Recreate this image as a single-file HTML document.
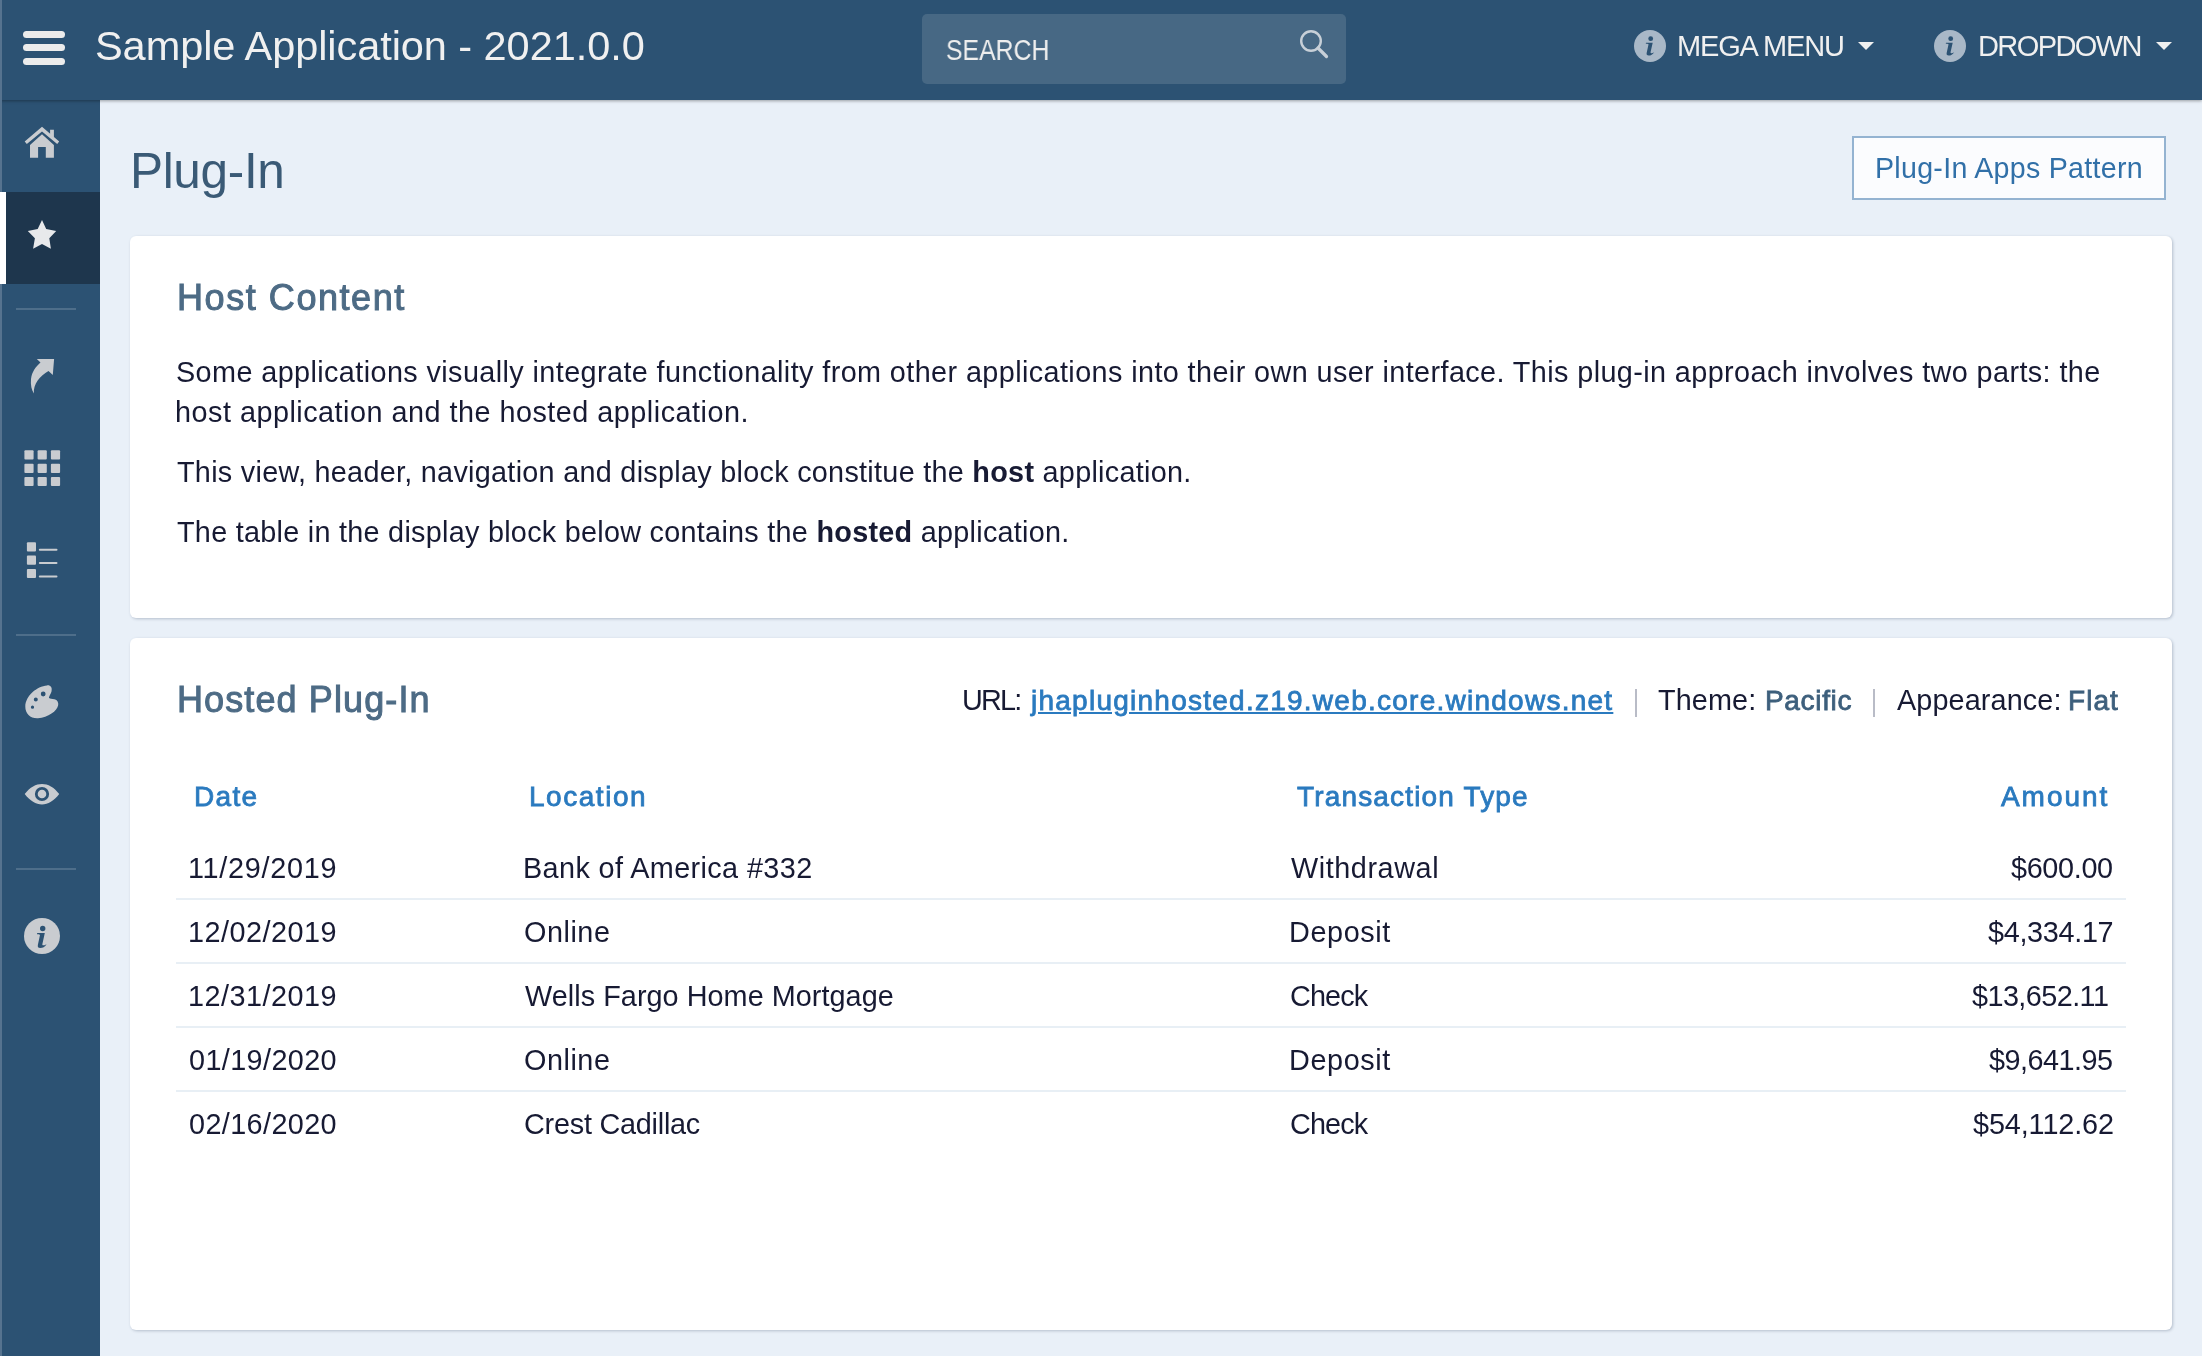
<!DOCTYPE html>
<html>
<head>
<meta charset="utf-8">
<title>Plug-In</title>
<style>
html,body{margin:0;padding:0;}
body{width:2202px;height:1356px;overflow:hidden;position:relative;background:#e9f0f8;font-family:"Liberation Sans",sans-serif;}
.a{position:absolute;}
.t{position:absolute;white-space:nowrap;line-height:1;z-index:8;will-change:transform;}
#hdr{left:0;top:0;width:2202px;height:100px;background:#2c5273;box-shadow:0 1px 3px rgba(0,0,0,.35);z-index:5;}
#side{left:0;top:100px;width:100px;height:1256px;background:#2c5273;z-index:4;}
#edge{left:0;top:0;width:2px;height:1356px;background:#56738f;z-index:6;}
.sep{position:absolute;left:16px;width:60px;height:2px;background:#4e6e8a;z-index:4;}
.card{position:absolute;left:130px;width:2042px;background:#fff;border-radius:6px;box-shadow:1px 1px 3px rgba(30,50,80,.26);}
.rowline{position:absolute;left:176px;width:1950px;height:2px;background:#e8eff5;}
.vbar{position:absolute;width:2px;height:28px;background:#b9bcc7;}
</style>
</head>
<body>
<div id="hdr" class="a">
  <div class="a" style="left:23px;top:31px;width:42px;height:7px;border-radius:4px;background:#ececec"></div>
  <div class="a" style="left:23px;top:44px;width:42px;height:7px;border-radius:4px;background:#ececec"></div>
  <div class="a" style="left:23px;top:58px;width:42px;height:7px;border-radius:4px;background:#ececec"></div>
  <div class="a" style="left:922px;top:14px;width:424px;height:70px;border-radius:5px;background:#476884"></div>
  <svg class="a" style="left:1290px;top:20px" width="50" height="50" viewBox="1290 20 50 50">
    <circle cx="1311" cy="41" r="9.8" fill="none" stroke="#c8d0d8" stroke-width="2.4"/>
    <line x1="1318" y1="48" x2="1326.5" y2="56.5" stroke="#c8d0d8" stroke-width="3.2" stroke-linecap="round"/>
  </svg>
  <svg class="a" style="left:1630px;top:26px" width="40" height="40" viewBox="1630 26 40 40">
    <circle cx="1650" cy="46" r="16" fill="#a9b8c7"/>
    <circle cx="1650.7" cy="38.7" r="2.4" fill="#2c5273"/>
    <path d="M1646 42.8 L1652.7 42.8 L1650.6 52 C1650.3 53.3 1651.2 53.7 1654.2 52.2 C1652.6 54.7 1650.9 55.5 1648.7 55.5 C1646.9 55.5 1646.3 54.6 1646.7 52.8 L1648.5 44.4 C1648.3 43.8 1647 43.7 1645.8 43.8 Z" fill="#2c5273"/>
  </svg>
  <svg class="a" style="left:1856px;top:40px" width="20" height="12" viewBox="1856 40 20 12"><path d="M1858 42 L1874 42 L1866 50 Z" fill="#f0f0f0"/></svg>
  <svg class="a" style="left:1930px;top:26px" width="40" height="40" viewBox="1930 26 40 40">
    <circle cx="1950" cy="46" r="16" fill="#a9b8c7"/>
    <circle cx="1950.7" cy="38.7" r="2.4" fill="#2c5273"/>
    <path d="M1946 42.8 L1952.7 42.8 L1950.6 52 C1950.3 53.3 1951.2 53.7 1954.2 52.2 C1952.6 54.7 1950.9 55.5 1948.7 55.5 C1946.9 55.5 1946.3 54.6 1946.7 52.8 L1948.5 44.4 C1948.3 43.8 1947 43.7 1945.8 43.8 Z" fill="#2c5273"/>
  </svg>
  <svg class="a" style="left:2154px;top:40px" width="20" height="12" viewBox="2154 40 20 12"><path d="M2156 42 L2172 42 L2164 50 Z" fill="#f0f0f0"/></svg>
</div>
<div id="edge" class="a"></div>
<div id="side" class="a"></div>
<div class="a" style="left:0;top:192px;width:100px;height:92px;background:#1e364d;z-index:4"></div>
<div class="a" style="left:0;top:192px;width:6px;height:92px;background:#ffffff;z-index:7"></div>
<div class="sep" style="top:308px"></div>
<div class="sep" style="top:634px"></div>
<div class="sep" style="top:868px"></div>
<svg class="a" style="left:0;top:100px;z-index:4" width="100" height="900" viewBox="0 100 100 900">
  <g fill="#c9ccd0">
    <path d="M42 126.8 L59.2 141.6 L57.2 144 L42 131.6 L26.8 144 L24.7 141.6 Z"/>
    <path d="M50.1 129.8 L53.9 129.8 L53.9 139.5 L50.1 136.4 Z"/>
    <path d="M42 134.3 L53.9 145 L53.9 157.8 L45.8 157.8 L45.8 147 L38.1 147 L38.1 157.8 L30 157.8 L30 145 Z"/>
    <path d="M36.8 359.1 L54.1 359 L52.8 375.1 L48.5 371 C40 376 33 384 33.9 393.5 C31.5 390 30.5 385 31 379 C31.8 372 35.5 367 40.5 362.5 Z"/>
    <rect x="24.4" y="450.3" width="9.2" height="9.2" rx="1"/>
    <rect x="37.6" y="450.3" width="9.2" height="9.2" rx="1"/>
    <rect x="50.9" y="450.3" width="9.2" height="9.2" rx="1"/>
    <rect x="24.4" y="463.7" width="9.2" height="9.2" rx="1"/>
    <rect x="37.6" y="463.7" width="9.2" height="9.2" rx="1"/>
    <rect x="50.9" y="463.7" width="9.2" height="9.2" rx="1"/>
    <rect x="24.4" y="476.9" width="9.2" height="9.2" rx="1"/>
    <rect x="37.6" y="476.9" width="9.2" height="9.2" rx="1"/>
    <rect x="50.9" y="476.9" width="9.2" height="9.2" rx="1"/>
    <rect x="26.9" y="542.3" width="9.1" height="9.2" rx="1"/>
    <rect x="26.9" y="555.6" width="9.1" height="9.2" rx="1"/>
    <rect x="26.9" y="568.9" width="9.1" height="9.2" rx="1"/>
    <rect x="38.8" y="548.8" width="18.7" height="2" rx="1"/>
    <rect x="38.8" y="562" width="18.7" height="2" rx="1"/>
    <rect x="38.8" y="575.6" width="18.7" height="2" rx="1"/>
    <path fill-rule="evenodd" d="M47 685.4 C50.5 685 52.5 687.5 51.5 691.5 C50.8 694 49.3 695.5 48.9 697.8 C50 699.3 52 698.7 54.5 699.2 C57.5 699.8 58.6 702.5 58.2 705 C57.3 711 48 717.5 38 718.2 C30.5 718.6 25.2 714 25.3 706.5 C25.5 695.5 37 686.2 47 685.4 Z M43.2 694 m-2.4 0 a2.4 2.4 0 1 0 4.8 0 a2.4 2.4 0 1 0 -4.8 0 Z M35.8 699.6 m-2 0 a2 2 0 1 0 4 0 a2 2 0 1 0 -4 0 Z M32.5 707.2 m-1.6 0 a1.6 1.6 0 1 0 3.2 0 a1.6 1.6 0 1 0 -3.2 0 Z"/>
    <path fill-rule="evenodd" d="M24.7 794 C30 787 36 783.9 42 783.9 C48 783.9 54 787 59.2 794 C54 801 48 804.4 42 804.4 C36 804.4 30 801 24.7 794 Z M42 794 m-7.1 0 a7.1 7.1 0 1 0 14.2 0 a7.1 7.1 0 1 0 -14.2 0 Z M42 794 m-4.3 0 a4.3 4.3 0 1 1 8.6 0 a4.3 4.3 0 1 1 -8.6 0 Z"/>
    <circle cx="42" cy="936" r="18"/>
  </g>
  <circle cx="42.7" cy="928.5" r="2.7" fill="#2c5273"/>
  <path d="M37.2 933 L44.8 933 L42.4 944 C42.1 945.5 43 946 46.6 944.2 C44.8 947 42.8 948 40.2 948 C38.2 948 37.4 947 37.9 944.8 L40 935 C39.8 934.3 38.4 934.2 37 934.3 Z" fill="#2c5273"/>
  <path d="M42 220 L46.2 229.1 L56.2 231.1 L49.3 238.2 L50.9 248.8 L42 244.1 L33.1 248.8 L34.9 238.2 L27.8 231.1 L37.7 229.1 Z" fill="#e8e9eb"/>
</svg>
<div class="a" style="left:1852px;top:136px;width:310px;height:60px;border:2px solid #94b3d1;background:#fbfcfe"></div>
<div class="card" style="top:236px;height:382px"></div>
<div class="card" style="top:638px;height:692px"></div>
<div class="vbar" style="left:1635px;top:689px"></div>
<div class="vbar" style="left:1873px;top:689px"></div>
<div class="rowline" style="top:898px"></div>
<div class="rowline" style="top:962px"></div>
<div class="rowline" style="top:1026px"></div>
<div class="rowline" style="top:1090px"></div>
<div class="t" id="title" style="left:95.2px;top:25.21px;font-size:41.5px;color:#f0f0f0;letter-spacing:-0.06px">Sample Application - 2021.0.0</div>
<div class="t" id="search" style="left:946.4px;top:36.0px;font-size:29px;color:#eeeeee;transform:scaleX(0.8548);transform-origin:0 0">SEARCH</div>
<div class="t" id="mega" style="left:1677.4px;top:32.0px;font-size:29px;color:#f0f0f0;letter-spacing:-1.15px">MEGA MENU</div>
<div class="t" id="drop" style="left:1978.4px;top:32.0px;font-size:29px;color:#f0f0f0;letter-spacing:-1.60px">DROPDOWN</div>
<div class="t" id="pagetitle" style="left:130px;top:146.3px;font-size:49.5px;color:#3a5a76;letter-spacing:-0.33px">Plug-In</div>
<div class="t" id="btn" style="left:1875.1px;top:153.8px;font-size:28.6px;color:#3170a8;letter-spacing:0.28px">Plug-In Apps Pattern</div>
<div class="t" id="h1" style="left:177px;top:280.21px;font-size:36px;color:#4d6b85;-webkit-text-stroke:1.0px #4d6b85;letter-spacing:1.56px">Host Content</div>
<div class="t" id="p1" style="left:176px;top:358.21px;font-size:28.8px;color:#171a33;letter-spacing:0.40px">Some applications visually integrate functionality from other applications into their own user interface. This plug-in approach involves two parts: the</div>
<div class="t" id="p2" style="left:175px;top:398.0px;font-size:28.8px;color:#171a33;letter-spacing:0.49px">host application and the hosted application.</div>
<div class="t" id="p3" style="left:177px;top:458.0px;font-size:28.8px;color:#171a33;letter-spacing:0.28px">This view, header, navigation and display block constitue the <b>host</b> application.</div>
<div class="t" id="p4" style="left:177px;top:518.0px;font-size:28.8px;color:#171a33;letter-spacing:0.27px">The table in the display block below contains the <b>hosted</b> application.</div>
<div class="t" id="h2" style="left:176.5px;top:682.3px;font-size:36px;color:#4d6b85;-webkit-text-stroke:1.0px #4d6b85;letter-spacing:1.11px">Hosted Plug-In</div>
<div class="t" id="url" style="left:961.8px;top:686.21px;font-size:28.8px;color:#171a33;letter-spacing:-1.80px">URL:</div>
<div class="t" id="link" style="left:1031px;top:687.21px;font-size:28px;color:#2a7abf;-webkit-text-stroke:0.8px #2a7abf;letter-spacing:1.25px;text-decoration:underline">jhapluginhosted.z19.web.core.windows.net</div>
<div class="t" id="theme" style="left:1657.9px;top:686.21px;font-size:28.8px;color:#171a33;letter-spacing:0.12px">Theme:</div>
<div class="t" id="pacific" style="left:1765px;top:687.21px;font-size:28px;color:#3d5f7c;-webkit-text-stroke:0.8px #3d5f7c;letter-spacing:0.67px">Pacific</div>
<div class="t" id="appear" style="left:1896.8px;top:686.21px;font-size:28.8px;color:#171a33;letter-spacing:0.12px">Appearance:</div>
<div class="t" id="flat" style="left:2068.4px;top:687.21px;font-size:28px;color:#3d5f7c;-webkit-text-stroke:0.8px #3d5f7c;letter-spacing:1.06px">Flat</div>
<div class="t" id="thd" style="left:193.9px;top:783.21px;font-size:28px;color:#2a7abf;-webkit-text-stroke:0.8px #2a7abf;letter-spacing:1.30px">Date</div>
<div class="t" id="thl" style="left:528.7px;top:783.21px;font-size:28px;color:#2a7abf;-webkit-text-stroke:0.8px #2a7abf;letter-spacing:1.53px">Location</div>
<div class="t" id="tht" style="left:1296.8px;top:783.21px;font-size:28px;color:#2a7abf;-webkit-text-stroke:0.8px #2a7abf;letter-spacing:1.16px">Transaction Type</div>
<div class="t" id="tha" style="left:2000.8px;top:783.21px;font-size:28px;color:#2a7abf;-webkit-text-stroke:0.8px #2a7abf;letter-spacing:1.94px">Amount</div>
<div class="t" id="r0d" style="left:188px;top:854.0px;font-size:28.8px;color:#171a33;letter-spacing:0.72px">11/29/2019</div>
<div class="t" id="r0l" style="left:522.5px;top:854.0px;font-size:28.8px;color:#171a33;letter-spacing:0.39px">Bank of America #332</div>
<div class="t" id="r0t" style="left:1291px;top:854.0px;font-size:28.8px;color:#171a33;letter-spacing:0.57px">Withdrawal</div>
<div class="t" id="r0a" style="right:89.2px;top:854.0px;font-size:28.8px;color:#171a33;letter-spacing:-0.33px">$600.00</div>
<div class="t" id="r1d" style="left:188px;top:918.0px;font-size:28.8px;color:#171a33;letter-spacing:0.50px">12/02/2019</div>
<div class="t" id="r1l" style="left:523.5px;top:918.0px;font-size:28.8px;color:#171a33;letter-spacing:0.54px">Online</div>
<div class="t" id="r1t" style="left:1289px;top:918.0px;font-size:28.8px;color:#171a33;letter-spacing:0.60px">Deposit</div>
<div class="t" id="r1a" style="right:88.2px;top:918.0px;font-size:28.8px;color:#171a33;letter-spacing:-0.31px">$4,334.17</div>
<div class="t" id="r2d" style="left:188px;top:982.0px;font-size:28.8px;color:#171a33;letter-spacing:0.50px">12/31/2019</div>
<div class="t" id="r2l" style="left:524.5px;top:982.0px;font-size:28.8px;color:#171a33;letter-spacing:0.05px">Wells Fargo Home Mortgage</div>
<div class="t" id="r2t" style="left:1290px;top:982.0px;font-size:28.8px;color:#171a33;letter-spacing:-0.85px">Check</div>
<div class="t" id="r2a" style="right:93.2px;top:982.0px;font-size:28.8px;color:#171a33;letter-spacing:-0.56px">$13,652.11</div>
<div class="t" id="r3d" style="left:189px;top:1046.0px;font-size:28.8px;color:#171a33;letter-spacing:0.39px">01/19/2020</div>
<div class="t" id="r3l" style="left:523.5px;top:1046.0px;font-size:28.8px;color:#171a33;letter-spacing:0.54px">Online</div>
<div class="t" id="r3t" style="left:1289px;top:1046.0px;font-size:28.8px;color:#171a33;letter-spacing:0.60px">Deposit</div>
<div class="t" id="r3a" style="right:89.2px;top:1046.0px;font-size:28.8px;color:#171a33;letter-spacing:-0.50px">$9,641.95</div>
<div class="t" id="r4d" style="left:189px;top:1110.0px;font-size:28.8px;color:#171a33;letter-spacing:0.39px">02/16/2020</div>
<div class="t" id="r4l" style="left:523.5px;top:1110.0px;font-size:28.8px;color:#171a33;letter-spacing:-0.23px">Crest Cadillac</div>
<div class="t" id="r4t" style="left:1290px;top:1110.0px;font-size:28.8px;color:#171a33;letter-spacing:-0.85px">Check</div>
<div class="t" id="r4a" style="right:88.2px;top:1110.0px;font-size:28.8px;color:#171a33;letter-spacing:-0.11px">$54,112.62</div>
</body>
</html>
